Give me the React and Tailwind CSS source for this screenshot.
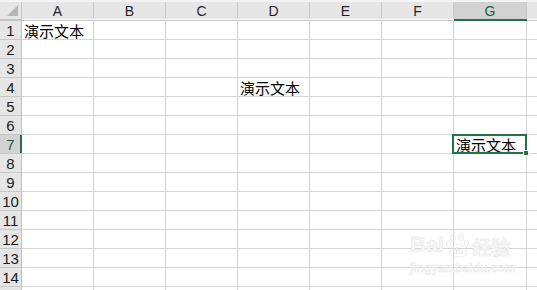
import React from "react";

const cols = ["A", "B", "C", "D", "E", "F", "G"];
const rows = Array.from({ length: 15 }, (_, i) => i + 1);
const font = { fontFamily: '"Liberation Sans", "Noto Sans CJK SC", sans-serif' };
const cjk = { fontFamily: '"Noto Sans CJK SC", sans-serif' };

function Cell({ r, c }) {
  const w = c === "G" ? "w-[73px]" : "w-[72px]";
  let text = null;
  if (r === 1 && c === "A") text = "演示文本";
  if (r === 4 && c === "D") text = "演示文本";
  if (r === 7 && c === "G") text = "演示文本";
  const sel = r === 7 && c === "G";
  return (
    <div className={`relative ${w} shrink-0 h-full border-r border-[#d4d4d4] flex items-center pl-[2px]`}>
      {text && (
        <span className="text-[15px] leading-none text-black whitespace-nowrap relative z-10" style={cjk}>
          {text}
        </span>
      )}
      {sel && (
        <div className="absolute -top-[1px] -left-[2px] -right-[1px] -bottom-[1px] border-2 border-[#217346] z-20">
          <div className="absolute -right-[4px] -bottom-[4px] w-[6px] h-[6px] bg-[#217346] border border-white" />
        </div>
      )}
    </div>
  );
}

export default function App() {
  return (
    <div className="relative w-[537px] h-[290px] overflow-hidden bg-white" style={font}>
      {/* header */}
      <div className="h-[2px] bg-[#f4f4f4]" />
      <div className="flex h-[17px] bg-[#e6e6e6]">
        <div className="relative w-[22px] shrink-0 h-full border-r border-[#c8c8c8]">
          <svg className="absolute left-[6px] top-[2px]" width="13" height="13" viewBox="0 0 13 13">
            <polygon points="12,1 12,12 1,12" fill="#b7b7b7" />
          </svg>
        </div>
        {cols.map((c) => (
          <div
            key={c}
            className={`${c === "G" ? "w-[73px] bg-[#d2d2d2] text-[#21603f]" : "w-[72px] text-[#262626]"} shrink-0 h-full border-r border-[#c8c8c8] flex items-center justify-center text-[14px] leading-none`}
          >
            <span className="pt-[1px]">{c}</span>
          </div>
        ))}
        <div className="flex-1" />
      </div>
      <div className="flex h-[2px]">
        <div className="w-[22px] shrink-0 bg-[#c4c4c4]" />
        <div className="w-[432px] shrink-0 bg-[#c4c4c4] h-[1px] mt-[1px]" />
        <div className="w-[73px] shrink-0 bg-[#217346]" />
        <div className="flex-1 bg-[#c4c4c4] h-[1px] mt-[1px]" />
      </div>
      {/* rows */}
      {rows.map((r) => (
        <div key={r} className="flex h-[19px] border-b border-[#d4d4d4]">
          <div
            className={`relative w-[22px] shrink-0 h-full ${r === 7 ? "bg-[#d2d2d2] text-[#21603f]" : "bg-[#e6e6e6] text-[#1a1a1a]"} flex items-center justify-center text-[15px] leading-none`}
          >
            <span className="-ml-[1px]">{r}</span>
            <div className={`absolute right-0 top-0 bottom-0 ${r === 7 ? "w-[2px] bg-[#217346]" : "w-[1px] bg-[#c0c0c0]"}`} />
            <div className="absolute left-0 right-0 -bottom-[1px] h-[1px] bg-[#c8c8c8]" />
          </div>
          {cols.map((c) => (
            <Cell key={c} r={r} c={c} />
          ))}
          <div className="flex-1" />
        </div>
      ))}
      {/* watermark */}
      <div className="absolute left-[410px] top-[232px] pointer-events-none select-none" style={{ fontFamily: '"Liberation Sans", "Noto Sans CJK SC", sans-serif' }}>
        <div className="flex items-end gap-[1px] text-[22px] leading-none font-bold text-[#f6f6f6]" style={{ WebkitTextStroke: "0.5px #e6e6e6" }}>
          <span>Bai</span>
          <svg width="26" height="26" viewBox="0 0 26 26" className="-mb-[2px]">
            <g fill="none" stroke="#e4e4e4" strokeWidth="0.8">
              <ellipse cx="8" cy="6" rx="2.5" ry="3.5" />
              <ellipse cx="16" cy="5" rx="2.5" ry="3.5" />
              <ellipse cx="3.5" cy="12" rx="2.2" ry="3" />
              <ellipse cx="21.5" cy="11" rx="2.2" ry="3" />
              <path d="M5 21c0-5 4-9 8-9s8 4 8 9c0 3-3 4-8 4s-8-1-8-4z" />
            </g>
            <text x="13" y="22" textAnchor="middle" fontSize="9" fontWeight="bold" fill="#ebebeb">du</text>
          </svg>
          <span className="text-[19px]" style={cjk}>经验</span>
        </div>
        <div className="text-[12px] leading-none mt-[6px] text-[#f6f6f6] font-bold" style={{ WebkitTextStroke: "0.4px #e6e6e6" }}>
          jingyan.baidu.com
        </div>
      </div>
    </div>
  );
}
